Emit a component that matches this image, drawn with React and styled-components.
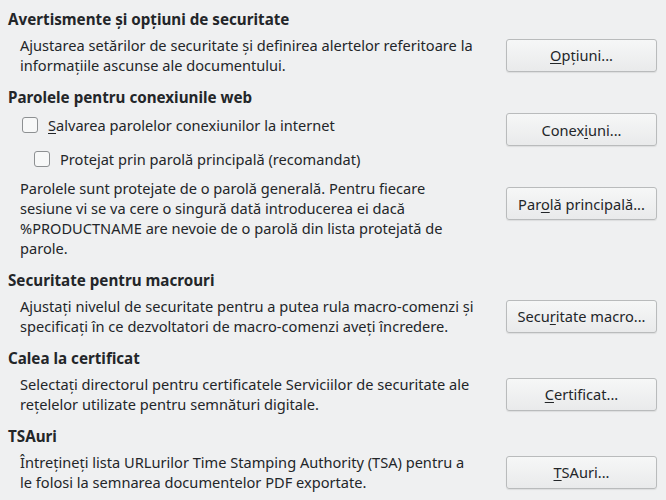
import styled, { createGlobalStyle } from "styled-components";

const GlobalStyle = createGlobalStyle`
  html, body {
    margin: 0;
    background: #eff0f1;
  }
  body {
    font-family: "Noto Sans", "Open Sans", sans-serif;
    font-size: 14.6px;
    color: #232629;
  }
`;

const Page = styled.div`
  width: 666px;
  height: 500px;
  box-sizing: border-box;
  padding: 9px 9px 0 8px;
  display: flex;
  flex-direction: column;
  gap: 12px;
  overflow: hidden;
`;

const Section = styled.section`
  display: flex;
  flex-direction: column;
  gap: 6px;
`;

const Heading = styled.h2`
  margin: 0;
  font-size: 15.2px;
  font-weight: 700;
  line-height: 20px;
`;

const Row = styled.div`
  display: grid;
  grid-template-columns: 456px 151px;
  justify-content: space-between;
  align-items: ${(p) => p.$align || "center"};
  padding-left: ${(p) => p.$indent || 12}px;
`;

const Text = styled.p`
  margin: 0;
  line-height: 20px;
`;

const Button = styled.button`
  width: 151px;
  height: 33px;
  margin-top: ${(p) => p.$offset || 0}px;
  font: inherit;
  color: #232629;
  background: linear-gradient(#f6f7f7, #e9eaeb);
  border: 1px solid #b9bbbc;
  border-radius: 3px;
  box-shadow: 0 1px 1px rgba(0, 0, 0, 0.08);
  padding: 0 4px;
  white-space: nowrap;
  cursor: default;
`;

const Check = styled.label`
  display: flex;
  align-items: center;
  gap: 10px;
  height: 20px;
  margin: ${(p) => p.$top || 0}px 0 0 ${(p) => p.$indent || 2}px;
`;

const Box = styled.span`
  width: 14px;
  height: 14px;
  border: 1px solid #8d9092;
  border-radius: 3px;
  background: #f7f8f8;
  flex: none;
`;

const Key = styled.span`
  text-decoration: underline;
  text-underline-offset: 2px;
`;

const Stack = styled.div`
  display: flex;
  flex-direction: column;
`;

export default function App() {
  return (
    <>
      <GlobalStyle />
      <Page>
        <Section>
          <Heading>Avertismente și opțiuni de securitate</Heading>
          <Row>
            <Text>
              Ajustarea setărilor de securitate și definirea alertelor referitoare la
              informațiile ascunse ale documentului.
            </Text>
            <Button>
              <Key>O</Key>pțiuni...
            </Button>
          </Row>
        </Section>

        <Section>
          <Heading>Parolele pentru conexiunile web</Heading>
          <Row $align="start">
            <Stack>
              <Check $top={2}>
                <Box />
                <span>
                  <Key>S</Key>alvarea parolelor conexiunilor la internet
                </span>
              </Check>
              <Check $top={14} $indent={14}>
                <Box />
                <span>
                  Prote<Key>j</Key>at prin parolă principală (recomandat)
                </span>
              </Check>
            </Stack>
            <Button>
              Conex<Key>i</Key>uni...
            </Button>
          </Row>
          <Row $align="start">
            <Text style={{ marginTop: 3 }}>
              Parolele sunt protejate de o parolă generală. Pentru fiecare
              sesiune vi se va cere o singură dată introducerea ei dacă
              %PRODUCTNAME are nevoie de o parolă din lista protejată de
              parole.
            </Text>
            <Button $offset={12}>
              Par<Key>o</Key>lă principală...
            </Button>
          </Row>
        </Section>

        <Section>
          <Heading>Securitate pentru macrouri</Heading>
          <Row>
            <Text>
              Ajustați nivelul de securitate pentru a putea rula macro-comenzi și
              specificați în ce dezvoltatori de macro-comenzi aveți încredere.
            </Text>
            <Button>
              Secu<Key>r</Key>itate macro...
            </Button>
          </Row>
        </Section>

        <Section>
          <Heading>Calea la certificat</Heading>
          <Row>
            <Text>
              Selectați directorul pentru certificatele Serviciilor de securitate ale
              rețelelor utilizate pentru semnături digitale.
            </Text>
            <Button>
              <Key>C</Key>ertificat...
            </Button>
          </Row>
        </Section>

        <Section>
          <Heading>TSAuri</Heading>
          <Row>
            <Text>
              Întrețineți lista URLurilor Time Stamping Authority (TSA) pentru a
              le folosi la semnarea documentelor PDF exportate.
            </Text>
            <Button>
              <Key>T</Key>SAuri...
            </Button>
          </Row>
        </Section>
      </Page>
    </>
  );
}
